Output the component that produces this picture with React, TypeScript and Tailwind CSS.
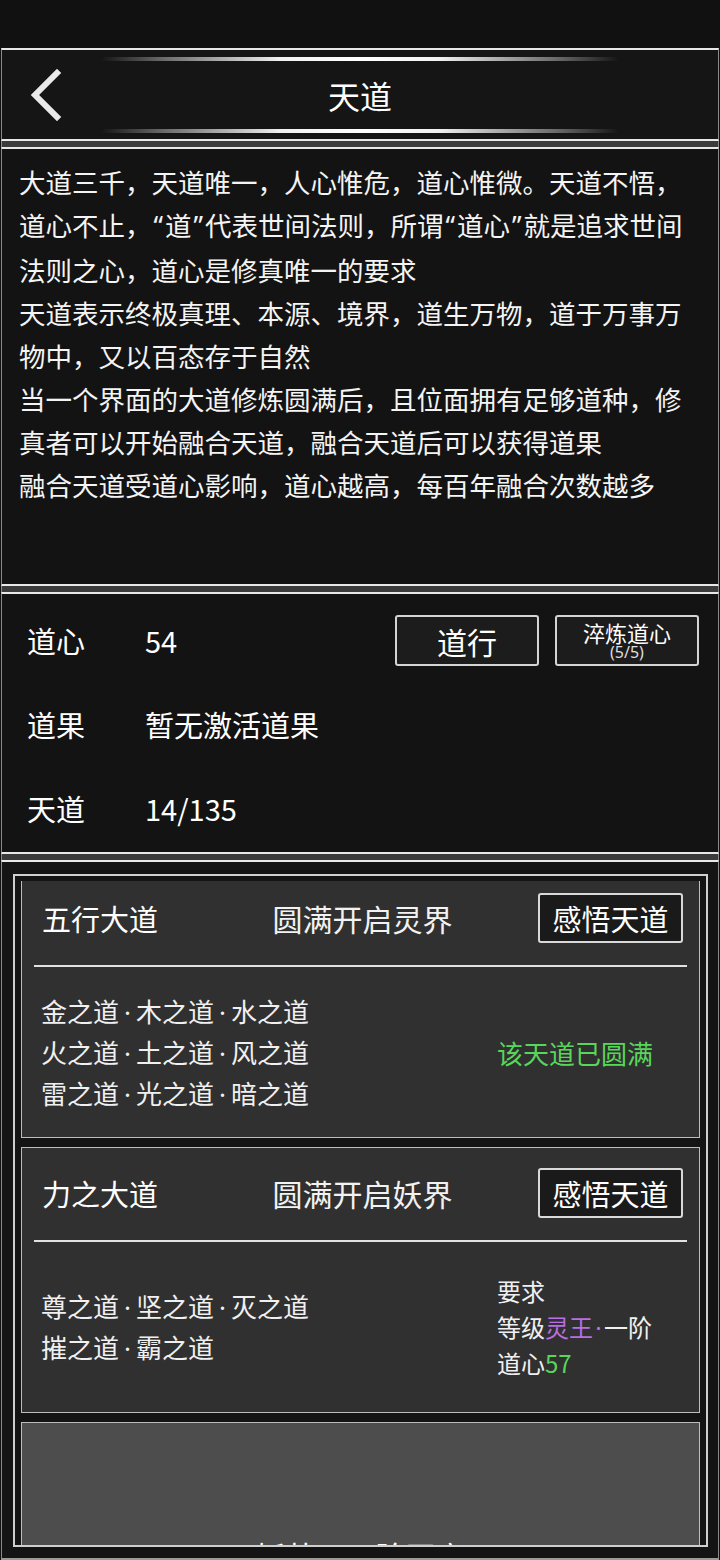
import React from 'react';

const font = "font-['Noto_Sans_CJK_SC','Noto_Sans',sans-serif]";

function Dot({ w = 'w-[17px]' }: { w?: string }) {
  return <span className={`inline-block ${w} text-center font-['Noto_Sans',sans-serif]`}>·</span>;
}

// narrow latin quotes, as the game font renders them
function Q({ children }: { children: React.ReactNode }) {
  return (
    <>
      <span className="font-['Noto_Sans',sans-serif] px-[2px]">“</span>
      {children}
      <span className="font-['Noto_Sans',sans-serif] px-[2px]">”</span>
    </>
  );
}

function DaoLine({ items }: { items: string[] }) {
  return (
    <div className="leading-[39px] whitespace-nowrap">
      {items.map((t, i) => (
        <React.Fragment key={t}>
          {i > 0 && <Dot />}
          {t}
        </React.Fragment>
      ))}
    </div>
  );
}

function CardHeader({ name, realm, top }: { name: string; realm: string; top: string }) {
  return (
    <>
      <div className={`flex items-center pl-[20px] pr-[16px] ${top} pb-[22px]`}>
        <div className="flex-1 text-[29px] leading-[50px]">{name}</div>
        <div className="text-[30px] leading-[50px] text-[#f2f2f2]">{realm}</div>
        <div className="flex-1 flex justify-end">
          <button className="w-[145px] h-[50px] bg-[#1a1a1a] border-2 border-[#d9d9d9] rounded-[3px] text-[29px] leading-none text-white">
            感悟天道
          </button>
        </div>
      </div>
      <div className="mx-[12px] h-[2px] bg-[#e2e2e2]" />
    </>
  );
}

export default function App() {
  const intro: React.ReactNode[] = [
    '大道三千，天道唯一，人心惟危，道心惟微。天道不悟，',
    <>道心不止，<Q>道</Q>代表世间法则，所谓<Q>道心</Q>就是追求世间</>,
    '法则之心，道心是修真唯一的要求',
    '天道表示终极真理、本源、境界，道生万物，道于万事万',
    '物中，又以百态存于自然',
    '当一个界面的大道修炼圆满后，且位面拥有足够道种，修',
    '真者可以开始融合天道，融合天道后可以获得道果',
    '融合天道受道心影响，道心越高，每百年融合次数越多',
  ];

  const side = 'border-l border-r border-l-[#8a8a8a] border-r-[#8a8a8a]';
  const band = `h-[6px] bg-[#3b3b3b] ${side}`;

  return (
    <div className={`w-[720px] h-[1560px] overflow-hidden bg-[#111111] text-white ${font}`}>
      <div className="h-[48px]" />
      <div className="px-px">
        {/* Header */}
        <header className={`h-[93px] bg-[#151515] border-t-2 border-b-2 border-t-[#e8e8e8] border-b-[#e8e8e8] ${side} flex flex-col pt-[7px] pb-[6px]`}>
          <div className="mx-[99px] h-[4px] bg-[linear-gradient(90deg,transparent,#6a6a6a_12%,#f2f2f2_35%,#ffffff_50%,#f2f2f2_65%,#6a6a6a_88%,transparent)]" />
          <div className="flex-1 flex items-center">
            <button className="ml-[22px] w-[42px] h-[50px] flex items-center justify-center">
              <svg width="36" height="52" viewBox="0 0 36 52">
                <polyline points="30,4 8,26 30,48" fill="none" stroke="#e9e9e9" strokeWidth="6" strokeLinecap="square" />
              </svg>
            </button>
            <div className="flex-1 text-center text-[32px] leading-none pr-[64px]">天道</div>
          </div>
          <div className="mx-[99px] h-[4px] bg-[linear-gradient(90deg,transparent,#6a6a6a_12%,#f2f2f2_35%,#ffffff_50%,#f2f2f2_65%,#6a6a6a_88%,transparent)]" />
        </header>

        <div className={band} />

        {/* Intro text */}
        <section className={`h-[439px] bg-[#131313] border-t-2 border-b-2 border-t-[#e8e8e8] border-b-[#e8e8e8] ${side} pl-[17px] pt-[11px]`}>
          {intro.map((line, i) => (
            <div key={i} className="text-[26.5px] leading-[43px] whitespace-nowrap text-[#f4f4f4]">
              {line}
            </div>
          ))}
        </section>

        <div className={band} />

        {/* Stats */}
        <section className={`h-[262px] bg-[#131313] border-t-2 border-b-2 border-t-[#e8e8e8] border-b-[#e8e8e8] ${side} pl-[25px] pr-[19px] pt-[21px] flex flex-col gap-[33px]`}>
          <div className="h-[51px] flex items-center">
            <div className="w-[118px] text-[29px] leading-none">道心</div>
            <div className="flex-1 text-[29px] leading-none">54</div>
            <div className="flex gap-[16px]">
              <button className="w-[144px] h-[51px] bg-[#1c1c1c] border-2 border-[#d4d4d4] rounded-[3px] text-[30px] leading-none text-white">
                道行
              </button>
              <button className="w-[144px] h-[51px] bg-[#1c1c1c] border-2 border-[#d4d4d4] rounded-[3px] flex flex-col items-center justify-center text-white">
                <span className="text-[22px] leading-[24px]">淬炼道心</span>
                <span className="text-[16px] leading-[17px] text-[#dedede] font-['Noto_Sans',sans-serif]">(5/5)</span>
              </button>
            </div>
          </div>
          <div className="h-[51px] flex items-center">
            <div className="w-[118px] text-[29px] leading-none">道果</div>
            <div className="text-[29px] leading-none">暂无激活道果</div>
          </div>
          <div className="h-[51px] flex items-center">
            <div className="w-[118px] text-[29px] leading-none">天道</div>
            <div className="text-[29px] leading-none">14/135</div>
          </div>
        </section>

        <div className={band} />

        {/* Dao list */}
        <section className={`h-[700px] bg-[#141414] border-t-2 border-b-2 border-t-[#e8e8e8] border-b-[#9a9a9a] ${side} pt-[12px] pl-[11px] pr-[10px]`}>
          <div className="h-[673px] border-2 border-[#cfcfcf] overflow-hidden px-[6px] pt-[5px] flex flex-col gap-[9px]">
            {/* Card 1, partly scrolled out */}
            <div className="shrink-0 bg-[#303030] border-l border-r border-b border-[#bdbdbd]">
              <CardHeader name="五行大道" realm="圆满开启灵界" top="pt-[12px]" />
              <div className="h-[170px] flex items-center pl-[19px] text-[26px] text-[#f0f0f0]">
                <div className="w-[456px]">
                  <DaoLine items={['金之道', '木之道', '水之道']} />
                  <DaoLine items={['火之道', '土之道', '风之道']} />
                  <DaoLine items={['雷之道', '光之道', '暗之道']} />
                </div>
                <div className="text-[#58d65a] leading-[39px]">该天道已圆满</div>
              </div>
            </div>

            {/* Card 2 */}
            <div className="shrink-0 bg-[#303030] border border-[#bdbdbd]">
              <CardHeader name="力之大道" realm="圆满开启妖界" top="pt-[20px]" />
              <div className="h-[170px] flex items-center pl-[19px] text-[26px] text-[#f0f0f0]">
                <div className="w-[456px]">
                  <DaoLine items={['尊之道', '坚之道', '灭之道']} />
                  <DaoLine items={['摧之道', '霸之道']} />
                </div>
                <div className="text-[24px] leading-[35.5px]">
                  <div>要求</div>
                  <div>
                    等级<span className="text-[#b86ee6]">灵王<Dot w="w-[11px]" /></span>一阶
                  </div>
                  <div>
                    道心<span className="text-[#58d65a]">57</span>
                  </div>
                </div>
              </div>
            </div>

            {/* Card 3 */}
            <div className="shrink-0 h-[266px] bg-[#4d4d4d] border border-[#bdbdbd] flex items-center justify-center">
              <div className="text-[30px] leading-none text-white">妖帅·一阶开启</div>
            </div>
          </div>
        </section>
      </div>
    </div>
  );
}
